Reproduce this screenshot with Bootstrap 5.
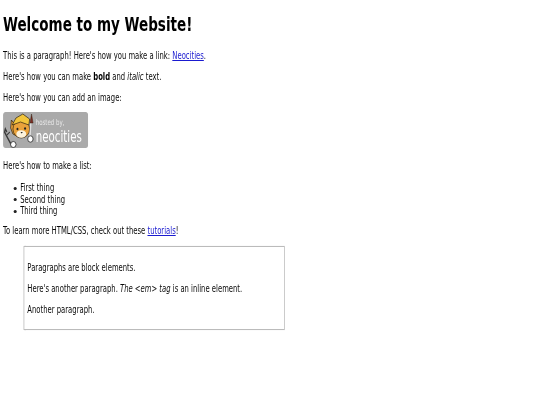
<!DOCTYPE html>
<html lang="en">
<head>
<meta charset="utf-8">
<title>Welcome</title>
<link rel="stylesheet" href="https://cdn.jsdelivr.net/npm/bootstrap@5.3.0/dist/css/bootstrap.min.css">
<style>
html,body{background:#fff}
body{overflow:hidden}
.site-frame{width:540px;height:405px;overflow:hidden}
.site-page{width:710px;transform:scaleX(.76);transform-origin:0 0;font-family:"DejaVu Sans",sans-serif;font-stretch:condensed;font-size:10px;line-height:11.5px;color:#0a0a0a;padding:3px 4px;filter:blur(.3px)}
.site-title{font-size:19.8px;line-height:24px;font-weight:700;margin:10px 0 12.5px;color:#000}
.site-para{margin:0 0 9.5px}
.site-para b{font-weight:700;color:#000}
.site-link{color:#1a1ad0}
.site-logo{display:block;width:112px;height:36px;margin:-1px 0 12.5px}
.site-logo .t1{font-size:8px;fill:#e8e8e8}
.site-logo .t2{font-size:15px;fill:#fff}
.site-list{margin:10.5px 0 8px;padding-left:22.5px;list-style:none}
.site-list li::before{content:"";display:inline-block;width:3.500px;height:3px;border-radius:50%;background:#222;margin-left:-8.500px;margin-right:5px;vertical-align:middle}
.site-box{width:344px;margin:0 0 0 27px;border:1px solid #bbb;box-shadow:0 0 1px #999;padding:15px 4px 14px;height:84px}
</style>
</head>
<body>
<div class="site-frame">
<div class="site-page">
<h1 class="site-title">Welcome to my Website!</h1>
<p class="site-para">This is a paragraph! Here's how you make a link: <a class="site-link" href="#">Neocities</a>.</p>
<p class="site-para">Here's how you can make <b>bold</b> and <i>italic</i> text.</p>
<p class="site-para">Here's how you can add an image:</p>
<svg class="site-logo" viewBox="0 0 112 36" role="img" aria-label="Hosted by Neocities">
  <rect width="112" height="36" rx="3.500" fill="#aaa"/>
  <path d="M5 20l-2-3-1 3 2 3 7 10" fill="none" stroke="#3a3a3a" stroke-width="1.700"/>
  <path d="M5 23l4-3" stroke="#3a3a3a" stroke-width="1.200"/>
  <path d="M11 8l4 4 3 12-5-2-3-6z" fill="#e9a23b" stroke="#2e2210" stroke-width=".8"/>
  <ellipse cx="24" cy="17" rx="11" ry="9" fill="#e9a23b" stroke="#2e2210" stroke-width=".8"/>
  <path d="M12 13l5-7 9-4 9 5-1 6-11-3z" fill="#f2c53c" stroke="#2e2210" stroke-width=".8"/>
  <ellipse cx="24" cy="22" rx="6.500" ry="3.800" fill="#fbf2dc"/>
  <ellipse cx="19" cy="17" rx="1.300" ry="1.200" fill="#222"/><ellipse cx="29" cy="16.500" rx="1.300" ry="1.200" fill="#222"/>
  <path d="M23 20h3l-1.500 1.500z" fill="#222"/>
  <path d="M35.500 25l1-14" stroke="#ddd" stroke-width="1.800"/>
  <path d="M35.500 11l2-9 2 9z" fill="#7e2a22" stroke="#2e2210" stroke-width=".5"/>
  <ellipse cx="36" cy="27" rx="3.600" ry="3.200" fill="#fff" stroke="#222" stroke-width=".9"/>
  <ellipse cx="13.500" cy="32.500" rx="3.600" ry="3" fill="#fff" stroke="#222" stroke-width=".9"/>
  <text class="t1" x="43" y="13">hosted by,</text>
  <text class="t2" x="43" y="30">neocities</text>
</svg>
<p class="site-para">Here's how to make a list:</p>
<ul class="site-list">
  <li>First thing</li>
  <li>Second thing</li>
  <li>Third thing</li>
</ul>
<p class="site-para">To learn more HTML/CSS, check out these <a class="site-link" href="#">tutorials</a>!</p>
<div class="site-box">
  <p class="site-para">Paragraphs are block elements.</p>
  <p class="site-para">Here's another paragraph. <i>The &lt;em&gt; tag</i> is an inline element.</p>
  <p class="site-para">Another paragraph.</p>
</div>
</div>
</div>
<script src="https://cdn.jsdelivr.net/npm/bootstrap@5.3.0/dist/js/bootstrap.bundle.min.js"></script>
</body>
</html>
